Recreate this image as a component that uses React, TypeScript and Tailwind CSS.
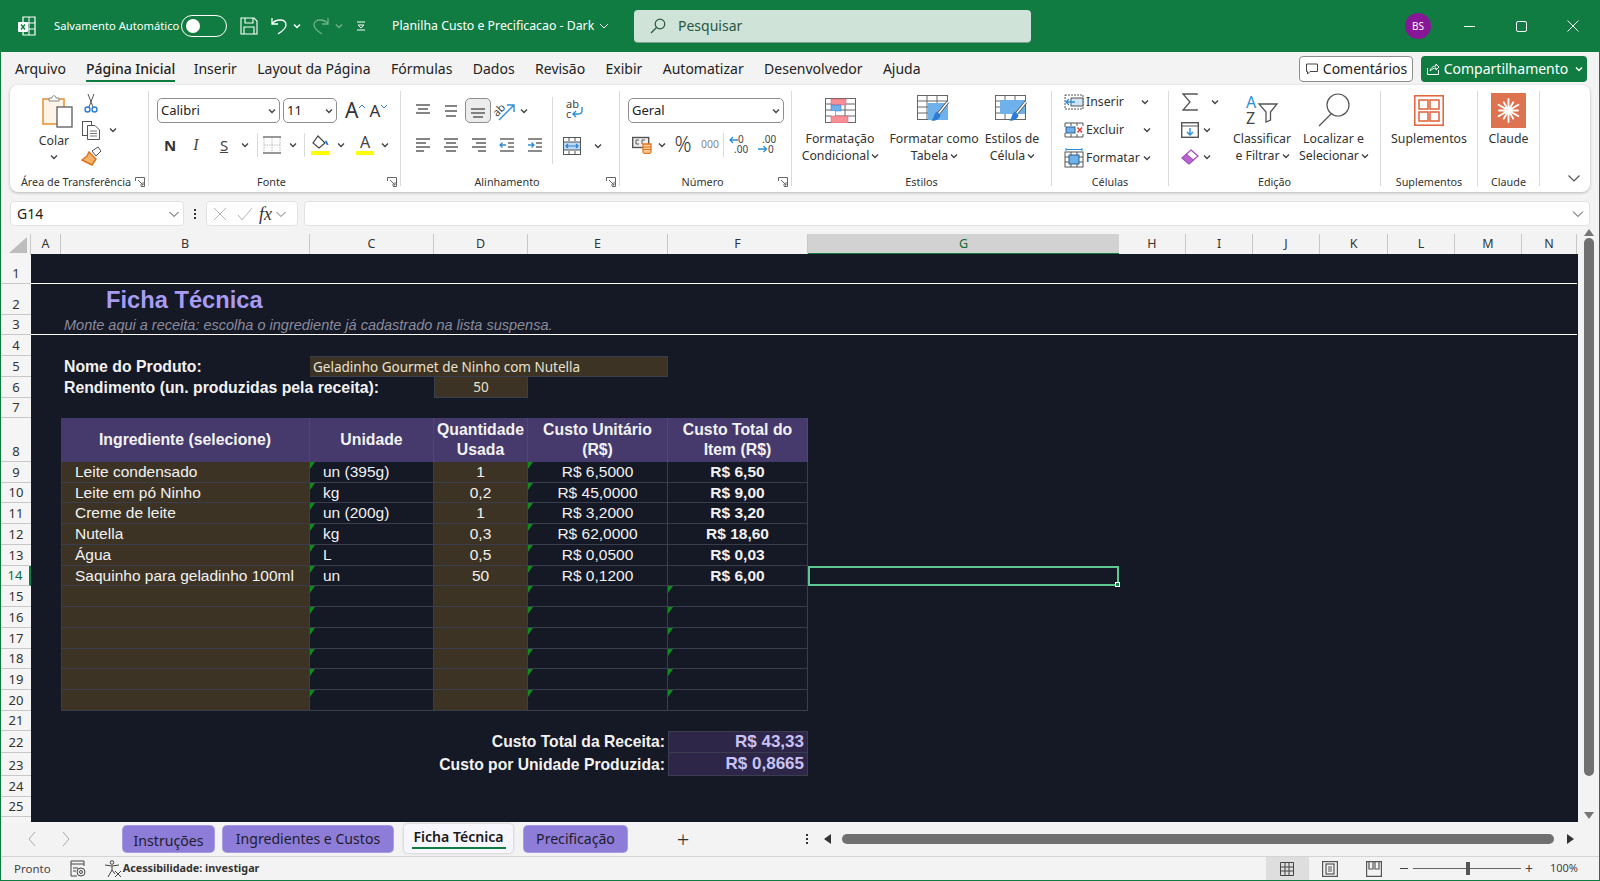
import React from 'react';

type IconProps = { className?: string };

const Chev = ({ className = '' }: IconProps) => (
  <svg viewBox="0 0 14 14" className={`w-[14px] h-[14px] shrink-0 ${className}`} fill="none" stroke="#444" strokeWidth="1.4">
    <path d="M4 5.5 7 8.5 10 5.5" />
  </svg>
);

// tres linhas horizontais, usado nos botoes de alinhamento
const Lines = ({ rows, color = '#666' }: { rows: number[][]; color?: string }) => (
  <svg viewBox="0 0 20 20" className="w-[20px] h-[20px]" stroke={color} strokeWidth="1.6">
    {rows.map((r, i) => (
      <line key={i} x1={r[0]} x2={r[1]} y1={r[2]} y2={r[2]} />
    ))}
  </svg>
);

const Launcher = () => (
  <svg viewBox="0 0 10 10" className="absolute right-[3px] bottom-[4px] w-[10px] h-[10px]" fill="none" stroke="#666" strokeWidth="1">
    <path d="M.5 4V.5H9.5V9.5H6" />
    <path d="M3 3 8 8M8 5V8H5" />
  </svg>
);

const Brush = ({ x, y }: { x: number; y: number }) => (
  <g transform={`translate(${x} ${y}) scale(1.2)`}>
    <path d="M14 0 6 10" stroke="#555" strokeWidth="2.6" />
    <path d="M14 0 6 10" stroke="#fff" strokeWidth="1.2" />
    <path d="M5 8 8 11C7 15 3 16 0 15.5 3 14 1.500 10 5 8Z" fill="#2b7cd3" />
  </g>
);

const SheetGrid = ({ w = 30, h = 24 }: { w?: number; h?: number }) => (
  <g stroke="#666" fill="none" strokeWidth="1">
    <rect x=".5" y=".5" width={w} height={h} />
    <line x1={w / 3} x2={w / 3} y1="0" y2={h} />
    <line x1={(2 * w) / 3} x2={(2 * w) / 3} y1="0" y2={h} />
    <line x1="0" x2={w} y1={h / 4} y2={h / 4} />
    <line x1="0" x2={w} y1={h / 2} y2={h / 2} />
    <line x1="0" x2={w} y1={(3 * h) / 4} y2={(3 * h) / 4} />
  </g>
);

const PasteIcon = () => (
  <svg viewBox="0 0 32 34" className="w-[32px] h-[34px]" fill="none">
    <rect x="1" y="5" width="21" height="25" fill="#fdf3e6" stroke="#e8963c" strokeWidth="1.6" />
    <path d="M7 7V4H10C10 1 14 1 14 4H17V7Z" fill="#fff" stroke="#888" />
    <rect x="15" y="13" width="15" height="20" fill="#fff" stroke="#666" strokeWidth="1.4" />
  </svg>
);

const ScissorsIcon = () => (
  <svg viewBox="0 0 16 20" className="w-[16px] h-[20px]" fill="none" strokeWidth="1">
    <path d="M5 0 10 13M11 0 6 13" stroke="#555" />
    <circle cx="4.5" cy="15.5" r="2.5" stroke="#2b7cd3" strokeWidth="1.4" />
    <circle cx="11.5" cy="15.5" r="2.5" stroke="#2b7cd3" strokeWidth="1.4" />
  </svg>
);

const CopyIcon = () => (
  <svg viewBox="0 0 20 20" className="w-[20px] h-[20px]" fill="#fff" stroke="#555">
    <rect x="1.5" y="1.5" width="9" height="14" />
    <path d="M6.5 5.5H14L18.5 10V19.5H6.5Z" />
    <path d="M9 11H16M9 13.500H16M9 16H16" strokeWidth=".8" />
  </svg>
);

const FormatPainter = () => (
  <svg viewBox="0 0 22 22" className="w-[22px] h-[22px]" fill="none">
    <path d="M12 5 18 1 21 5 16 10Z" fill="#fff" stroke="#555" />
    <path d="M9 6 16 13 12 19 2 14 7 10Z" fill="#f5b26b" stroke="#d9731a" strokeWidth="1.4" />
  </svg>
);

const BorderIcon = () => (
  <svg viewBox="0 0 18 18" className="w-[18px] h-[18px]" fill="none" stroke="#bbb">
    <path d="M1 1V17M17 1V17M9 1V17M1 9H17" strokeDasharray="1.500 1" />
    <path d="M0 1H18M0 17H18" stroke="#777" strokeWidth="1.6" />
  </svg>
);

const FillIcon = () => (
  <svg viewBox="0 0 18 22" className="w-[18px] h-[22px]">
    <path d="M7 2 14 9 8 14 2 9Z" fill="#fff" stroke="#444" strokeWidth="1.2" />
    <path d="M14.500 7C16 9 16.500 10 16.500 11" stroke="#2b7cd3" strokeWidth="2" fill="none" />
    <rect x="0" y="17" width="18" height="4" fill="#ffff00" />
  </svg>
);

const FontColorIcon = () => (
  <div className="w-[18px] h-[22px] flex flex-col items-center">
    <span className="text-[16px] leading-[17px] text-[#444]">A</span>
    <span className="w-[18px] h-[4px] bg-[#ffff00]" />
  </div>
);

const OrientIcon = () => (
  <svg viewBox="0 0 26 22" className="w-[26px] h-[22px] overflow-visible" fill="none">
    <text x="2" y="14" fontSize="11" fill="#444" transform="rotate(-45 8 11)" fontFamily="Noto Sans">ab</text>
    <path d="M8 20 22 6M16 5H23V12" stroke="#2b8fd8" strokeWidth="1.4" />
  </svg>
);

const WrapIcon = () => (
  <svg viewBox="0 0 20 24" className="w-[20px] h-[24px] overflow-visible" fill="none">
    <text x="2" y="10" fontSize="11" fill="#444" fontFamily="Noto Sans">ab</text>
    <text x="2" y="20" fontSize="11" fill="#444" fontFamily="Noto Sans">c</text>
    <path d="M18 9V13C18 16 16 16 14 16H9M12 13 9 16 12 19" stroke="#2b8fd8" strokeWidth="1.4" />
  </svg>
);

const MergeIcon = () => (
  <svg viewBox="0 0 18 18" className="w-[18px] h-[18px]" fill="none">
    <rect x=".5" y=".5" width="17" height="17" stroke="#555" />
    <rect x="1" y="5" width="16" height="8" fill="#bcdcf5" />
    <path d="M6 1V4M12 1V4M6 14V17M12 14V17M1 5H17M1 13H17" stroke="#555" />
    <path d="M3 9H15M5 7 3 9 5 11M13 7 15 9 13 11" stroke="#2b7cd3" strokeWidth="1.200" />
  </svg>
);

const AccountIcon = () => (
  <svg viewBox="0 0 20 18" className="w-[20px] h-[18px]" fill="none">
    <rect x=".7" y="1.500" width="16" height="10" fill="#eee" stroke="#555" strokeWidth="1.400" />
    <path d="M4 4H7M4 4V8H7M10 4H13M10 4V8" stroke="#555" />
    <path d="M11 8H19V16C19 18 11 18 11 16Z" fill="#f7c89a" stroke="#e5761a" strokeWidth="1.300" />
    <path d="M11 11H19M11 13.500H19" stroke="#e5761a" />
  </svg>
);

const DecimalIcon = ({ more }: { more?: boolean }) => (
  <svg viewBox="0 0 20 20" className="w-[20px] h-[20px] overflow-visible" fill="none">
    <text x={more ? 5 : 9} y="8" fontSize="10" fill="#444" fontFamily="Noto Sans">{more ? '.00' : '0'}</text>
    <text x={more ? 11 : 5} y="18" fontSize="10" fill="#444" fontFamily="Noto Sans">{more ? '0' : '.00'}</text>
    {more ? (
      <path d="M1 14H9M6.500 11 9.500 14 6.500 17" stroke="#2b8fd8" strokeWidth="1.300" />
    ) : (
      <path d="M9 5H1M4 2 1 5 4 8" stroke="#2b8fd8" strokeWidth="1.300" />
    )}
  </svg>
);

const CondFormatIcon = () => (
  <svg viewBox="0 0 31 25" className="w-[31px] h-[25px]">
    <SheetGrid />
    <rect x="6" y="1" width="15" height="6" fill="#f78f98" stroke="#d9535f" strokeWidth=".5" />
    <rect x="6" y="7" width="10" height="6" fill="#6fb1ea" stroke="#2b7cd3" strokeWidth=".5" />
    <rect x="6" y="13" width="4" height="5" fill="#fff" />
    <rect x="6" y="18" width="17" height="7" fill="#f78f98" stroke="#d9535f" strokeWidth=".5" />
  </svg>
);

const TableStyleIcon = () => (
  <svg viewBox="0 0 34 30" className="w-[34px] h-[30px]">
    <SheetGrid />
    <rect x="11" y="8" width="20" height="17" fill="#6fb1ea" />
    <Brush x={14} y={7} />
  </svg>
);

const CellStyleIcon = () => (
  <svg viewBox="0 0 34 30" className="w-[34px] h-[30px]">
    <SheetGrid />
    <rect x="5" y="5" width="25" height="14" fill="#6fb1ea" />
    <Brush x={14} y={7} />
  </svg>
);

const InsertCellIcon = () => (
  <svg viewBox="0 0 20 16" className="w-[20px] h-[16px]" fill="none">
    <path d="M1 1H19V15H1Z" stroke="#555" strokeDasharray="2 1" />
    <rect x="7" y="4" width="12" height="8" fill="#cfe4f7" stroke="#555" />
    <path d="M11 8H2M5 5 2 8 5 11" stroke="#2b8fd8" strokeWidth="1.300" />
  </svg>
);

const DeleteCellIcon = () => (
  <svg viewBox="0 0 20 16" className="w-[20px] h-[16px]" fill="none">
    <path d="M1 1H19M1 15H19M1 1V5M1 11V15M19 1V4M19 12V15M7 1V4M13 1V4M7 12V15M13 12V15" stroke="#555" />
    <rect x="2" y="5" width="9" height="6" fill="#6fb1ea" stroke="#2b5f91" />
    <path d="M13.500 5.500 18 10.500M18 5.500 13.500 10.500" stroke="#e03b3b" strokeWidth="1.400" />
  </svg>
);

const FormatCellIcon = () => (
  <svg viewBox="0 0 20 20" className="w-[20px] h-[20px]" fill="none">
    <rect x="1" y="4" width="18" height="15" stroke="#555" />
    <path d="M7 4V19M13 4V19M1 9H19M1 14H19" stroke="#555" />
    <rect x="5" y="7" width="10" height="9" fill="#6fb1ea" stroke="#2b5f91" />
    <path d="M2 1.500H18M2 0V3M18 0V3" stroke="#2b8fd8" />
  </svg>
);

const SigmaIcon = () => (
  <svg viewBox="0 0 16 18" className="w-[16px] h-[18px]" fill="none" stroke="#555" strokeWidth="1.300">
    <path d="M15 2V1H1L8 9 1 17H15V16" />
  </svg>
);

const FillDownIcon = () => (
  <svg viewBox="0 0 18 16" className="w-[18px] h-[16px]" fill="none">
    <rect x=".7" y=".7" width="16.600" height="14.600" stroke="#555" strokeWidth="1.400" />
    <path d="M1 4H17" stroke="#555" />
    <path d="M9 6V13M6 10 9 13 12 10" stroke="#2b8fd8" strokeWidth="1.400" />
  </svg>
);

const EraserIcon = () => (
  <svg viewBox="0 0 18 16" className="w-[18px] h-[16px]" fill="none">
    <path d="M10 1 17 7 8 15 1 9Z" fill="#fff" stroke="#a64bc0" strokeWidth="1.300" />
    <path d="M5.500 5 12.500 11 8 15 1 9Z" fill="#b565cc" stroke="#a64bc0" />
  </svg>
);

const SortIcon = () => (
  <svg viewBox="0 0 32 30" className="w-[32px] h-[30px] overflow-visible" fill="none">
    <text x="0" y="13" fontSize="16" fill="#2b8fd8" fontFamily="Noto Sans">A</text>
    <text x="0" y="29" fontSize="16" fill="#444" fontFamily="Noto Sans">Z</text>
    <path d="M13 9H31L24.500 17V25L20 27V17Z" stroke="#555" strokeWidth="1.300" />
  </svg>
);

const FindIcon = () => (
  <svg viewBox="0 0 32 34" className="w-[32px] h-[34px]" fill="none" stroke="#555" strokeWidth="1.200">
    <circle cx="20" cy="12" r="11" />
    <path d="M13 21 1 33" />
  </svg>
);

const AddinIcon = () => (
  <svg viewBox="0 0 30 31" className="w-[30px] h-[31px]" fill="none" stroke="#e0603a" strokeWidth="1.500">
    <rect x=".8" y=".8" width="28.400" height="29.400" />
    <rect x="5" y="5" width="9" height="9" />
    <rect x="16" y="5" width="9" height="9" />
    <rect x="5" y="17" width="9" height="9" />
    <rect x="16" y="17" width="9" height="9" />
  </svg>
);

const ClaudeIcon = () => (
  <svg viewBox="0 0 35 35" className="w-[35px] h-[35px]">
    <rect width="35" height="35" fill="#de7350" />
    <g stroke="#fff" strokeWidth="1.800" strokeLinecap="round">
      {[0, 30, 60, 90, 120, 150, 180, 210, 240, 270, 300, 330].map((a) => (
        <line key={a} x1="17.500" y1="14" x2="17.500" y2={a % 60 === 0 ? 6 : 8} transform={`rotate(${a} 17.500 17.500)`} />
      ))}
    </g>
    <circle cx="17.500" cy="17.500" r="4" fill="#fff" />
  </svg>
);

const ExcelLogo = () => (
  <svg viewBox="0 0 18 20" className="w-[18px] h-[20px]" fill="none">
    <path d="M5 1H17V19H5Z" stroke="#fff" strokeWidth="1.200" />
    <path d="M11 1V19M5 7H17M5 13H17" stroke="#fff" />
    <rect x="0" y="6" width="10" height="10" rx="1" fill="#fff" />
    <path d="M3 8.500 7 13.500M7 8.500 3 13.500" stroke="#107c41" strokeWidth="1.400" />
  </svg>
);

const Group = ({ w, label, launcher, children }: { w: string; label: string; launcher?: boolean; children: React.ReactNode }) => (
  <div className={`${w} shrink-0 flex flex-col pb-[1px]`}>
    <div className="flex-1 min-h-0">{children}</div>
    <div className="relative h-[20px] shrink-0 text-[10.8px] leading-[21px] text-center text-[#333] whitespace-nowrap">
      <span className={launcher ? 'pr-[6px]' : ''}>{label}</span>
      {launcher && <Launcher />}
    </div>
  </div>
);

const Sep = () => <div className="w-px my-[6px] bg-[#dadada] shrink-0" />;

const Select = ({ w, text }: { w: string; text: string }) => (
  <div className={`${w} h-[25px] shrink-0 flex items-center justify-between pl-[3px] border border-[#8e8e8e] rounded-[5px] bg-white text-[13px] text-[#222]`}>
    {text}
    <Chev />
  </div>
);

const Slot = ({ w, children }: { w: string; children: React.ReactNode }) => (
  <div className={`${w} h-[24px] shrink-0 flex items-center justify-center`}>{children}</div>
);

const BigButton = ({ w, icon, lines }: { w: string; icon: React.ReactNode; lines: React.ReactNode[] }) => (
  <div className={`${w} shrink-0 flex flex-col items-center pt-[7px]`}>
    <div className="h-[36px] flex items-center justify-center">{icon}</div>
    <div className="text-[12.3px] leading-[17px] text-[#333] text-center whitespace-nowrap mt-[2px]">
      {lines.map((l, i) => (
        <div key={i} className="flex items-center justify-center">{l}</div>
      ))}
    </div>
  </div>
);

const SmallChev = () => <Chev className="-ml-[1px] -mr-[4px]" />;

const Ribbon = () => (
  <div className="ml-[9px] mr-[9px] h-[107px] flex bg-white rounded-[8px] shadow-[0_1px_3px_rgba(0,0,0,0.25)]">
    <Group w="w-[138px]" label="Área de Transferência" launcher>
      <div className="flex pl-[24px] pt-[9px]">
        <div className="w-[40px] flex flex-col items-center">
          <div className="ml-[8px]"><PasteIcon /></div>
          <span className="text-[12.3px] leading-[17px] mt-[4px] text-[#333]">Colar</span>
          <Chev className="mt-[1px]" />
        </div>
        <div className="ml-[4px] flex flex-col gap-[4px]">
          <div className="ml-[5px]"><ScissorsIcon /></div>
          <div className="flex items-center ml-[3px] mt-[2px]"><CopyIcon /><Chev className="ml-[5px]" /></div>
          <div className="ml-[2px] mt-[2px]"><FormatPainter /></div>
        </div>
      </div>
    </Group>
    <Sep />
    <Group w="w-[251px]" label="Fonte" launcher>
      <div className="pt-[13px] pl-[8px] flex items-center">
        <Select w="w-[123px]" text="Calibri" />
        <div className="ml-[3px]"><Select w="w-[54px]" text="11" /></div>
        <span className="ml-[8px] text-[21px] leading-[25px] text-[#333]">A</span>
        <svg viewBox="0 0 8 6" className="w-[8px] h-[6px] mb-[8px]" fill="none" stroke="#2b7cd3"><path d="M1 4 4 1 7 4" /></svg>
        <span className="ml-[3px] text-[17px] leading-[25px] text-[#333]">A</span>
        <svg viewBox="0 0 8 6" className="w-[8px] h-[6px] mb-[8px]" fill="none" stroke="#2b7cd3"><path d="M1 1 4 4 7 1" /></svg>
      </div>
      <div className="mt-[10px] pl-[9px] flex items-center">
        <Slot w="w-[24px]"><span className="text-[15px] font-bold text-[#333]">N</span></Slot>
        <Slot w="w-[28px]"><span className="font-['Liberation_Serif',serif] italic text-[16px] text-[#444]">I</span></Slot>
        <Slot w="w-[28px]"><span className="underline text-[15px] text-[#444]">S</span></Slot>
        <Chev />
        <div className="ml-[5px] w-px h-[24px] bg-[#dadada]" />
        <div className="ml-[5px]"><BorderIcon /></div>
        <Chev className="ml-[5px]" />
        <div className="ml-[4px] w-px h-[24px] bg-[#dadada]" />
        <div className="ml-[6px]"><FillIcon /></div>
        <Chev className="ml-[5px]" />
        <div className="ml-[8px]"><FontColorIcon /></div>
        <Chev className="ml-[4px]" />
      </div>
    </Group>
    <Sep />
    <Group w="w-[218px]" label="Alinhamento" launcher>
      <div className="flex">
        <div className="w-[151px] shrink-0 pt-[13px] pl-[8px]">
          <div className="flex items-center h-[25px]">
            <Slot w="w-[28px]"><Lines rows={[[3, 17, 4], [5, 15, 8], [3, 17, 12]]} /></Slot>
            <Slot w="w-[28px]"><Lines rows={[[4, 16, 5], [4, 16, 10], [5, 15, 15]]} /></Slot>
            <div className="w-[26px] h-[25px] flex items-center justify-center border border-[#8e8e8e] rounded-[5px] bg-[#ececec]">
              <Lines rows={[[3, 17, 8], [3, 17, 12], [5, 15, 16]]} />
            </div>
            <OrientIcon />
            <Chev />
          </div>
          <div className="flex items-center mt-[10px]">
            <Slot w="w-[28px]"><Lines rows={[[3, 17, 4], [3, 13, 8], [3, 17, 12], [3, 11, 16]]} /></Slot>
            <Slot w="w-[28px]"><Lines rows={[[3, 17, 4], [5, 15, 8], [3, 17, 12], [5, 15, 16]]} /></Slot>
            <Slot w="w-[28px]"><Lines rows={[[3, 17, 4], [7, 17, 8], [3, 17, 12], [9, 17, 16]]} /></Slot>
            <Slot w="w-[28px]">
              <svg viewBox="0 0 20 20" className="w-[20px] h-[20px]" fill="none">
                <path d="M3 4H17M11 8H17M11 12H17M3 16H17" stroke="#666" strokeWidth="1.600" />
                <path d="M9 10H3M5.500 7.500 3 10 5.500 12.500" stroke="#2b8fd8" strokeWidth="1.300" />
              </svg>
            </Slot>
            <Slot w="w-[28px]">
              <svg viewBox="0 0 20 20" className="w-[20px] h-[20px]" fill="none">
                <path d="M3 4H17M11 8H17M11 12H17M3 16H17" stroke="#666" strokeWidth="1.600" />
                <path d="M3 10H9M6.500 7.500 9 10 6.500 12.500" stroke="#2b8fd8" strokeWidth="1.300" />
              </svg>
            </Slot>
          </div>
        </div>
        <div className="w-px h-[67px] mt-[12px] bg-[#dadada] shrink-0" />
        <div className="pt-[13px] pl-[10px]">
          <div className="ml-[1px] h-[28px]"><WrapIcon /></div>
          <div className="flex items-center mt-[11px]"><MergeIcon /><Chev className="ml-[10px]" /></div>
        </div>
      </div>
    </Group>
    <Sep />
    <Group w="w-[171px]" label="Número" launcher>
      <div className="pt-[13px] pl-[8px]">
        <Select w="w-[156px]" text="Geral" />
        <div className="flex items-center mt-[10px] pl-[4px]">
          <AccountIcon />
          <Chev className="ml-[3px]" />
          <Slot w="w-[22px]"><span className="text-[21px] font-light text-[#333] ml-[6px]">%</span></Slot>
          <Slot w="w-[30px]"><span className="text-[10.5px] text-[#888] ml-[8px]">000</span></Slot>
          <div className="w-px h-[24px] bg-[#dadada] ml-[2px]" />
          <div className="ml-[5px]"><DecimalIcon /></div>
          <div className="ml-[8px]"><DecimalIcon more /></div>
        </div>
      </div>
    </Group>
    <Sep />
    <Group w="w-[259px]" label="Estilos">
      <div className="flex">
        <BigButton w="w-[96px]" icon={<CondFormatIcon />} lines={['Formatação', <>Condicional<SmallChev /></>]} />
        <BigButton w="w-[92px]" icon={<TableStyleIcon />} lines={['Formatar como', <>Tabela<SmallChev /></>]} />
        <BigButton w="w-[64px]" icon={<CellStyleIcon />} lines={['Estilos de', <>Célula<SmallChev /></>]} />
      </div>
    </Group>
    <Sep />
    <Group w="w-[116px]" label="Células">
      <div className="pt-[3px] pl-[12px] text-[12.3px] text-[#333]">
        {[
          { icon: <InsertCellIcon />, text: 'Inserir', gap: 'w-[52px]' },
          { icon: <DeleteCellIcon />, text: 'Excluir', gap: 'w-[54px]' },
          { icon: <FormatCellIcon />, text: 'Formatar', gap: 'w-[54px]' },
        ].map((r) => (
          <div key={r.text} className="flex items-center h-[28px]">
            <div className="w-[20px] flex justify-center">{r.icon}</div>
            <span className={`ml-[2px] ${r.gap}`}>{r.text}</span>
            <Chev />
          </div>
        ))}
      </div>
    </Group>
    <Sep />
    <Group w="w-[211px]" label="Edição">
      <div className="flex">
        <div className="w-[58px] pt-[3px] pl-[11px] shrink-0">
          <div className="flex items-center h-[28px]"><div className="w-[20px] flex justify-center"><SigmaIcon /></div><Chev className="ml-[8px]" /></div>
          <div className="flex items-center h-[28px]"><div className="w-[20px] flex justify-center"><FillDownIcon /></div><Chev /></div>
          <div className="flex items-center h-[26px]"><div className="w-[20px] flex justify-center"><EraserIcon /></div><Chev /></div>
        </div>
        <BigButton w="w-[70px]" icon={<SortIcon />} lines={['Classificar', <>e Filtrar<SmallChev /></>]} />
        <BigButton w="w-[73px]" icon={<FindIcon />} lines={['Localizar e', <>Selecionar<SmallChev /></>]} />
      </div>
    </Group>
    <Sep />
    <Group w="w-[96px]" label="Suplementos">
      <BigButton w="w-[96px]" icon={<AddinIcon />} lines={['Suplementos']} />
    </Group>
    <Sep />
    <Group w="w-[61px]" label="Claude">
      <BigButton w="w-[61px]" icon={<ClaudeIcon />} lines={['Claude']} />
    </Group>
    <Sep />
    <div className="flex-1 flex items-end justify-end pr-[9px] pb-[7px]">
      <svg viewBox="0 0 14 14" className="w-[14px] h-[14px]" fill="none" stroke="#555" strokeWidth="1.200"><path d="M1.500 4.500 7 10 12.500 4.500" /></svg>
    </div>
  </div>
);

const TitleBar = () => (
  <div className="h-[52px] shrink-0 flex items-center bg-[#107c41] text-white">
    <div className="ml-[17px]"><ExcelLogo /></div>
    <div className="ml-[18px] w-[127px] text-[11.2px] whitespace-nowrap">Salvamento Automático</div>
    <div className="w-[46px] h-[22px] rounded-full border border-white flex items-center pl-[4px]">
      <span className="w-[14px] h-[14px] rounded-full bg-white" />
    </div>
    <svg viewBox="0 0 18 18" className="ml-[13px] w-[18px] h-[18px]" fill="none" stroke="#fff" strokeWidth="1.100">
      <path d="M1 1H14L17 4V17H1Z" />
      <path d="M5 1V6H13V1M4 17V10H14V17" />
    </svg>
    <svg viewBox="0 0 16 18" className="ml-[13px] w-[16px] h-[18px]" fill="none" stroke="#fff" strokeWidth="1.300">
      <path d="M1 7C4 2 15 1 15 8 15 12 10 15 7 17M1 1V7H7" />
    </svg>
    <Chev className="ml-[3px] [&_path]:stroke-white" />
    <svg viewBox="0 0 16 18" className="ml-[9px] w-[16px] h-[18px]" fill="none" stroke="#6fb08d" strokeWidth="1.300">
      <path d="M15 7C12 2 1 1 1 8 1 12 6 15 9 17M15 1V7H9" />
    </svg>
    <Chev className="ml-[3px] [&_path]:stroke-[#6fb08d]" />
    <svg viewBox="0 0 14 14" className="ml-[8px] w-[14px] h-[14px]" fill="none" stroke="#fff"><path d="M3 3H11M4 6 7 9 10 6H4ZM3 11H11" /></svg>
    <div className="ml-[24px] w-[242px] flex items-center text-[12.3px] whitespace-nowrap">
      Planilha Custo e Precificacao - Dark
      <svg viewBox="0 0 10 10" className="ml-[5px] w-[10px] h-[10px]" fill="none" stroke="#fff"><path d="M1 3 5 7 9 3" /></svg>
    </div>
    <div className="w-[397px] h-[33px] flex items-center pl-[16px] rounded-[4px] bg-[#cfe3d8] border-b border-[#7f9f8d] text-[14px] text-[#27573f]">
      <svg viewBox="0 0 16 16" className="w-[16px] h-[16px]" fill="none" stroke="#27573f" strokeWidth="1.200">
        <circle cx="10" cy="6" r="4.800" />
        <path d="M6.500 9.500 1 15" />
      </svg>
      <span className="ml-[12px]">Pesquisar</span>
    </div>
    <div className="flex-1" />
    <div className="w-[26px] h-[26px] rounded-full bg-[#881798] flex items-center justify-center text-[10px] mr-[12px]">BS</div>
    <div className="w-[52px] flex justify-center"><span className="w-[11px] h-px bg-white" /></div>
    <div className="w-[52px] flex justify-center"><span className="w-[11px] h-[11px] rounded-[2px] border border-white" /></div>
    <div className="w-[52px] flex justify-center">
      <svg viewBox="0 0 12 12" className="w-[12px] h-[12px]" stroke="#fff"><path d="M.5 .5 11.500 11.500M11.500 .5 .5 11.500" /></svg>
    </div>
  </div>
);

const menuItems = ['Layout da Página', 'Fórmulas', 'Dados', 'Revisão', 'Exibir', 'Automatizar', 'Desenvolvedor', 'Ajuda'];

const MenuBar = () => (
  <div className="h-[33px] shrink-0 flex items-center text-[14px] text-[#222]">
    <span className="ml-[14px]">Arquivo</span>
    <span className="ml-[20px] relative font-medium">
      Página Inicial
      <span className="absolute left-0 right-0 -bottom-[3px] h-[2px] bg-[#107c41]" />
    </span>
    <span className="ml-[18.400px]">Inserir</span>
    {menuItems.map((m) => (
      <span key={m} className="ml-[20.400px]">{m}</span>
    ))}
    <div className="flex-1" />
    <div className="w-[114px] h-[26px] flex items-center justify-center gap-[4px] border border-[#8e8e8e] rounded-[4px] bg-white">
      <svg viewBox="0 0 14 14" className="w-[14px] h-[14px]" fill="none" stroke="#444"><path d="M1.500 2H12.500V9.500H5L2.500 12V9.500H1.500Z" /></svg>
      Comentários
    </div>
    <div className="ml-[8px] mr-[12px] w-[166px] h-[26px] flex items-center justify-center gap-[4px] rounded-[4px] bg-[#107c41] text-white">
      <svg viewBox="0 0 14 14" className="w-[14px] h-[14px]" fill="none" stroke="#fff"><path d="M1.500 6V12.500H12.500V8M4 9C5 5 8 4 10 4V2L13 5 10 8V6C8 6 6 7 4 9Z" /></svg>
      Compartilhamento
      <Chev className="[&_path]:stroke-white -mr-[4px]" />
    </div>
  </div>
);

const FormulaBar = () => (
  <div className="mt-[9px] ml-[9px] mr-[9px] h-[25px] flex text-[14px] text-[#222]">
    <div className="w-[174px] flex items-center justify-between pl-[6px] pr-[3px] bg-white rounded-[4px] border border-[#e2e2e2]">
      G14
      <svg viewBox="0 0 12 12" className="w-[12px] h-[12px]" fill="none" stroke="#444"><path d="M1.500 4 6 8.500 10.500 4" /></svg>
    </div>
    <div className="w-[22px] flex flex-col items-center justify-center gap-[2px]">
      <span className="w-[2px] h-[2px] bg-[#333]" />
      <span className="w-[2px] h-[2px] bg-[#333]" />
      <span className="w-[2px] h-[2px] bg-[#333]" />
    </div>
    <div className="w-[92px] flex items-center pl-[6px] bg-white rounded-[4px] border border-[#e2e2e2]">
      <svg viewBox="0 0 14 14" className="w-[14px] h-[14px]" stroke="#b5b5b5"><path d="M1 1 13 13M13 1 1 13" /></svg>
      <svg viewBox="0 0 16 14" className="ml-[10px] w-[16px] h-[14px]" fill="none" stroke="#b5b5b5"><path d="M1 8 5 13 15 1" /></svg>
      <span className="ml-[6px] font-['Liberation_Serif',serif] italic text-[18px] leading-none text-[#333]">fx</span>
      <svg viewBox="0 0 12 12" className="ml-[3px] w-[12px] h-[12px]" fill="none" stroke="#777"><path d="M1.500 4 6 8.500 10.500 4" /></svg>
    </div>
    <div className="ml-[6px] flex-1 flex items-center justify-end pr-[5px] bg-white rounded-[4px] border border-[#e2e2e2]">
      <svg viewBox="0 0 12 12" className="w-[12px] h-[12px]" fill="none" stroke="#444"><path d="M1 3.500 6 8.500 11 3.500" /></svg>
    </div>
  </div>
);

const sheetCols = 'grid grid-cols-[30px_30px_249px_124px_94px_140px_140px_311px_67px_67px_67px_68px_67px_67px_55px]';
const colLetters = ['A', 'B', 'C', 'D', 'E', 'F', 'G', 'H', 'I', 'J', 'K', 'L', 'M', 'N'];

const ColumnHeader = () => (
  <div className={`${sheetCols} h-[20px] bg-[#f3f3f3] text-[12.5px] leading-[20px] text-[#333] text-center`}>
    <div className="relative border-r border-[#c8c8c8]">
      <span className="absolute right-[3px] bottom-[2px] w-0 h-0 border-l-[18px] border-l-transparent border-b-[16px] border-b-[#bdbdbd]" />
    </div>
    {colLetters.map((c) => (
      <div key={c} className={c === 'G' ? 'bg-[#d2d2d2] border-b-2 border-[#107c41] text-[#0e6b38] leading-[19px]' : 'border-r border-[#c8c8c8]'}>
        {c}
      </div>
    ))}
  </div>
);

const ingredients = [
  { name: 'Leite condensado', un: 'un (395g)', qty: '1', cost: 'R$ 6,5000', total: 'R$ 6,50' },
  { name: 'Leite em pó Ninho', un: 'kg', qty: '0,2', cost: 'R$ 45,0000', total: 'R$ 9,00' },
  { name: 'Creme de leite', un: 'un (200g)', qty: '1', cost: 'R$ 3,2000', total: 'R$ 3,20' },
  { name: 'Nutella', un: 'kg', qty: '0,3', cost: 'R$ 62,0000', total: 'R$ 18,60' },
  { name: 'Água', un: 'L', qty: '0,5', cost: 'R$ 0,0500', total: 'R$ 0,03' },
  { name: 'Saquinho para geladinho 100ml', un: 'un', qty: '50', cost: 'R$ 0,1200', total: 'R$ 6,00' },
  { name: '', un: '', qty: '', cost: '', total: '' },
  { name: '', un: '', qty: '', cost: '', total: '' },
  { name: '', un: '', qty: '', cost: '', total: '' },
  { name: '', un: '', qty: '', cost: '', total: '' },
  { name: '', un: '', qty: '', cost: '', total: '' },
  { name: '', un: '', qty: '', cost: '', total: '' },
];

const tableRowHeights = ['h-[21px]', 'h-[20px]', 'h-[21px]', 'h-[21px]', 'h-[21px]', 'h-[20px]', 'h-[21px]', 'h-[21px]', 'h-[21px]', 'h-[20px]', 'h-[21px]', 'h-[21px]'];

const Tri = () => (
  <span className="absolute left-0 top-0 w-0 h-0 border-t-[7px] border-t-[#0f8a1f] border-r-[5px] border-r-transparent" />
);

const RowHead = ({ n, active }: { n: number; active?: boolean }) => (
  <div
    className={`flex items-end justify-center bg-[#f5f5f5] border-b border-[#c8c8c8] text-[13px] leading-[19px] font-['Noto_Sans',sans-serif] ${
      active ? 'bg-[#e4e4e4] text-[#0e6b38] border-r-2 border-r-[#107c41]' : 'text-[#333]'
    }`}
  >
    {n}
  </div>
);

const line = 'border-[#3a3d4c]';
const inputCell = `relative flex items-center border-r border-b ${line} bg-[#3d3324]`;
const darkCell = `relative flex items-center border-r border-b ${line}`;
const headCell = 'flex items-center justify-center text-center font-bold text-[15.8px] leading-[20px] border-r border-[#4f4579] bg-[#453a6b]';

const Sheet = () => (
  <div className="flex-1 min-w-0 overflow-hidden bg-[#151825] text-[15.5px] leading-[18px] text-[#f2f2f2] font-['Liberation_Sans',Arial,sans-serif]">
    <div className={`${sheetCols} h-[30px]`}>
      <RowHead n={1} />
      <div className="col-start-2 col-end-16 border-b border-white" />
    </div>
    <div className={`${sheetCols} h-[31px]`}>
      <RowHead n={2} />
      <div className="col-start-2 col-end-16 pl-[75px] flex items-center text-[23.7px] leading-[26px] font-bold text-[#a79cf2]">Ficha Técnica</div>
    </div>
    <div className={`${sheetCols} h-[20px]`}>
      <RowHead n={3} />
      <div className="col-start-2 col-end-16 pl-[33px] flex items-center border-b border-white text-[14.5px] italic text-[#8b8b9b]">
        Monte aqui a receita: escolha o ingrediente já cadastrado na lista suspensa.
      </div>
    </div>
    <div className={`${sheetCols} h-[21px]`}><RowHead n={4} /></div>
    <div className={`${sheetCols} h-[21px]`}>
      <RowHead n={5} />
      <div className="col-start-3 pl-[3px] flex items-center font-bold text-[15.8px] whitespace-nowrap">Nome do Produto:</div>
      <div className={`col-start-4 col-span-3 pl-[3px] font-['Noto_Sans',sans-serif] text-[13.5px] text-[#e8e2cf] border-t ${inputCell}`}>
        Geladinho Gourmet de Ninho com Nutella
      </div>
    </div>
    <div className={`${sheetCols} h-[21px]`}>
      <RowHead n={6} />
      <div className="col-start-3 pl-[3px] flex items-center font-bold text-[15.8px] whitespace-nowrap">Rendimento (un. produzidas pela receita):</div>
      <div className={`col-start-5 justify-center font-['Noto_Sans',sans-serif] text-[13.5px] text-[#e8e2cf] border-l ${inputCell}`}>50</div>
    </div>
    <div className={`${sheetCols} h-[20px]`}><RowHead n={7} /></div>
    <div className={`${sheetCols} h-[44px]`}>
      <RowHead n={8} />
      <div className={`col-start-3 ${headCell}`}>Ingrediente (selecione)</div>
      <div className={headCell}>Unidade</div>
      <div className={headCell}>Quantidade<br />Usada</div>
      <div className={headCell}>Custo Unitário<br />(R$)</div>
      <div className={headCell}>Custo Total do<br />Item (R$)</div>
    </div>
    {ingredients.map((r, i) => (
      <div key={i} className={`${sheetCols} ${tableRowHeights[i]}`}>
        <RowHead n={i + 9} active={i === 5} />
        <div className={`col-start-3 pl-[13px] border-l whitespace-nowrap ${inputCell}`}>{r.name}</div>
        <div className={`pl-[13px] ${darkCell}`}><Tri />{r.un}</div>
        <div className={`justify-center ${inputCell}`}>{r.qty}</div>
        <div className={`justify-center ${darkCell}`}><Tri />{r.cost}</div>
        <div className={`justify-center font-bold ${darkCell}`}>{r.total ? null : <Tri />}{r.total}</div>
        {i === 5 && (
          <div className="relative border-2 border-[#5fc792]">
            <span className="absolute -right-[3px] -bottom-[3px] w-[5px] h-[5px] bg-[#107c41] border border-white" />
          </div>
        )}
      </div>
    ))}
    <div className={`${sheetCols} h-[20px]`}><RowHead n={21} /></div>
    <div className={`${sheetCols} h-[22px]`}>
      <RowHead n={22} />
      <div className="col-start-3 col-span-4 pr-[3px] flex items-center justify-end font-bold text-[15.7px] whitespace-nowrap">Custo Total da Receita:</div>
      <div className={`pr-[3px] justify-end font-bold text-[17px] text-[#c9c2f5] bg-[#2d2648] border-l border-t ${darkCell}`}>R$ 43,33</div>
    </div>
    <div className={`${sheetCols} h-[23px]`}>
      <RowHead n={23} />
      <div className="col-start-3 col-span-4 pr-[3px] flex items-center justify-end font-bold text-[15.7px] whitespace-nowrap">Custo por Unidade Produzida:</div>
      <div className={`pr-[3px] justify-end font-bold text-[17px] text-[#c9c2f5] bg-[#2d2648] border-l ${darkCell}`}>R$ 0,8665</div>
    </div>
    <div className={`${sheetCols} h-[21px]`}><RowHead n={24} /></div>
    <div className={`${sheetCols} h-[20px]`}><RowHead n={25} /></div>
    <div className={`${sheetCols} h-[5px]`}><div className="bg-[#f5f5f5]" /></div>
  </div>
);

const VScroll = () => (
  <div className="w-[21px] shrink-0 -mt-[8px] flex flex-col items-center pt-[3px] pb-[3px] bg-[#f3f3f3]">
    <span className="w-0 h-0 border-x-[5px] border-x-transparent border-b-[7px] border-b-[#777]" />
    <span className="mt-[2px] w-[10px] h-[538px] rounded-[5px] bg-[#707070]" />
    <div className="flex-1" />
    <span className="w-0 h-0 border-x-[5px] border-x-transparent border-t-[7px] border-t-[#777]" />
  </div>
);

const purpleTab = 'h-[26px] flex items-center justify-center rounded-[4px] bg-[#8e7cd9] text-[#1d1d2b] shadow-[0_0_0_1px_#a99be0]';

const TabsBar = () => (
  <div className="h-[35px] shrink-0 flex items-center bg-[#f3f3f3] text-[14.1px] border-b border-[#d4d4d4]">
    <svg viewBox="0 0 10 16" className="ml-[26px] w-[10px] h-[16px]" fill="none" stroke="#aaa"><path d="M8 1 2 8 8 15" /></svg>
    <svg viewBox="0 0 10 16" className="ml-[24px] w-[10px] h-[16px]" fill="none" stroke="#aaa"><path d="M2 1 8 8 2 15" /></svg>
    <div className={`ml-[52px] w-[91px] ${purpleTab}`}><span className="mt-[3px]">Instruções</span></div>
    <div className={`ml-[9px] w-[170px] ${purpleTab}`}>Ingredientes e Custos</div>
    <div className="ml-[11px] w-[109px] h-[29px] flex flex-col items-center justify-center rounded-[4px] bg-[#f7f6fd] font-semibold shadow-[0_0_3px_rgba(0,0,0,0.25)] -mt-[2px]">
      <span className="leading-[20px] text-[#1a1a1a]">Ficha Técnica</span>
      <span className="w-[94px] h-[2px] bg-[#107c41]" />
    </div>
    <div className={`ml-[11px] w-[103px] ${purpleTab}`}>Precificação</div>
    <div className="ml-[46px] w-[20px] text-center text-[22px] leading-none font-light text-[#333]">+</div>
    <div className="ml-[113px] flex flex-col gap-[2px]">
      <span className="w-[2px] h-[2px] bg-[#333]" />
      <span className="w-[2px] h-[2px] bg-[#333]" />
      <span className="w-[2px] h-[2px] bg-[#333]" />
    </div>
    <span className="ml-[16px] w-0 h-0 border-y-[5px] border-y-transparent border-r-[7px] border-r-[#333]" />
    <span className="ml-[11px] w-[712px] h-[10px] rounded-[5px] bg-[#707070]" />
    <span className="ml-[13px] w-0 h-0 border-y-[5px] border-y-transparent border-l-[7px] border-l-[#333]" />
  </div>
);

const StatusBar = () => (
  <div className="flex-1 flex items-center bg-[#f3f3f3] text-[11.5px] text-[#444]">
    <span className="ml-[13px]">Pronto</span>
    <svg viewBox="0 0 16 18" className="ml-[19px] w-[16px] h-[18px]" fill="none" stroke="#444">
      <path d="M1 1H14V6M1 1V16H7M1 4H14M3 8H8M3 11H6" />
      <circle cx="11" cy="12" r="4" />
      <circle cx="11" cy="12" r="1.500" />
    </svg>
    <svg viewBox="0 0 18 18" className="ml-[18px] w-[18px] h-[18px]" fill="none" stroke="#444">
      <circle cx="8" cy="2.500" r="1.800" />
      <path d="M1 5 8 6 15 5M8 6V10L4 17M8 10 11 14M11 11 17 17M17 11 11 17" />
    </svg>
    <span className="ml-[1px] font-bold text-[#333] text-[10.8px]">Acessibilidade: investigar</span>
    <div className="flex-1" />
    <div className="w-[43px] h-full flex items-center justify-center bg-[#dedede]">
      <svg viewBox="0 0 14 14" className="w-[14px] h-[14px]" fill="none" stroke="#444"><path d="M.5 .5H13.500V13.500H.5ZM5 .5V13.500M9 .5V13.500M.5 5H13.500M.5 9H13.500" /></svg>
    </div>
    <svg viewBox="0 0 16 16" className="ml-[13px] w-[16px] h-[16px]" fill="none" stroke="#555" strokeWidth="1.200"><rect x=".6" y=".6" width="14.800" height="14.800" /><rect x="4" y="3" width="8" height="10" /><path d="M6 6H10M6 8H10M6 10H10" /></svg>
    <svg viewBox="0 0 16 16" className="ml-[28px] w-[16px] h-[16px]" fill="none" stroke="#555" strokeWidth="1.200"><path d="M.6 .6H15.400V15.400H.6ZM3 .6V8H7V.6M9 .6V8H13V.6" /></svg>
    <span className="ml-[18px] w-[8px] h-px bg-[#444]" />
    <div className="relative ml-[5px] w-[108px] h-px bg-[#666]">
      <span className="absolute left-[53px] -top-[6px] w-[4px] h-[13px] bg-[#555]" />
    </div>
    <span className="ml-[4px] text-[14px] leading-none">+</span>
    <span className="ml-[17px] mr-[21px] text-[11px]">100%</span>
  </div>
);

export default function App() {
  return (
    <div className="w-[1600px] h-[881px] overflow-hidden flex flex-col bg-[#f3f3f3] border-x border-b border-[#107c41] font-['Noto_Sans','Open_Sans',sans-serif]">
      <TitleBar />
      <MenuBar />
      <Ribbon />
      <FormulaBar />
      <div className="h-[8px] shrink-0" />
      <div className="h-[588px] shrink-0 flex">
        <div className="flex-1 min-w-0 flex flex-col">
          <ColumnHeader />
          <Sheet />
        </div>
        <VScroll />
      </div>
      <TabsBar />
      <StatusBar />
    </div>
  );
}
